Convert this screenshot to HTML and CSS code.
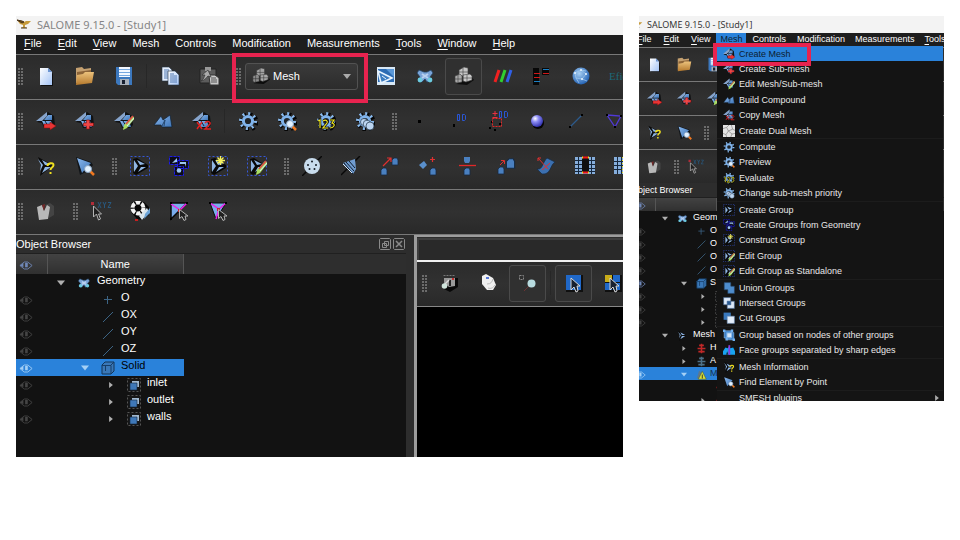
FILE: index.html
```html
<!DOCTYPE html>
<html lang="en">
<head>
<meta charset="utf-8">
<title>SALOME 9.15.0 - [Study1]</title>
<link rel="stylesheet" href="styles.css">
</head>
<body>
<svg class="sprite" aria-hidden="true">
<defs>
<linearGradient id="blue" x1="0" y1="0" x2="1" y2="1"><stop offset="0" stop-color="#8ab8ee"/><stop offset="1" stop-color="#3f76b8"/></linearGradient>
<linearGradient id="paper" x1="0" y1="0" x2="1" y2="1"><stop offset="0" stop-color="#fff"/><stop offset="1" stop-color="#a4c4f6"/></linearGradient>
<linearGradient id="tan" x1="0" y1="0" x2="0" y2="1"><stop offset="0" stop-color="#ecc27c"/><stop offset="1" stop-color="#b4782c"/></linearGradient>
<radialGradient id="ball" cx=".35" cy=".3" r=".7"><stop offset="0" stop-color="#fff"/><stop offset=".4" stop-color="#8c8cf4"/><stop offset="1" stop-color="#3434b0"/></radialGradient>
<radialGradient id="earth" cx=".4" cy=".35" r=".7"><stop offset="0" stop-color="#a8d0f4"/><stop offset="1" stop-color="#1c5cb0"/></radialGradient>

<symbol id="logo" viewBox="0 0 16 12"><path d="M1 2l5 1 2 1 2-1h5l-3 3-3 1v2l2 1H5l2-1V7L4 6z" fill="#c69a3a"/><path d="M1 2l5 1 2 1-2 1zM5 10h6" stroke="#4a3418" fill="#7a5a24"/></symbol>
<symbol id="new" viewBox="0 0 20 20"><path d="M4 3h9l4 5v12H5z" fill="#111"/><path d="M4 2h8l4 4v13H4z" fill="url(#paper)"/><path d="M12 2l4 4h-4z" fill="#6c94d0"/></symbol>
<symbol id="open" viewBox="0 0 20 20"><path d="M1 2l6-1 2 2 7-1v15H1z" fill="#c4a070"/><path d="M2 6l14-2v13H2z" fill="#8c6438"/><path d="M2 9l6-1 2-2h9l-2 11-16 2z" fill="url(#tan)"/></symbol>
<symbol id="save" viewBox="0 0 20 20"><path d="M2 1h16v18H4l-2-2z" fill="#3c78be"/><path d="M5 1h11v10H5z" fill="#f4f8ff"/><path d="M5 3.500h11M5 6.500h11M5 9.500h11" stroke="#76a8e0"/><path d="M6 13h9v6H6z" fill="#a8b0ba"/><path d="M8 14h3v4H8z" fill="#182030"/></symbol>
<symbol id="copy" viewBox="0 0 20 20"><path d="M2 1h7l3 3v11H2z" fill="#e4eefc" stroke="#234" stroke-width=".6"/><path d="M4 4h5M4 6h5M4 8h5M4 10h5M4 12h5" stroke="#5078b0"/><path d="M8 5h7l4 4v10H8z" fill="url(#paper)" stroke="#234" stroke-width=".6"/><path d="M10 8h4M10 10h7M10 12h7M10 14h7M10 16h7" stroke="#5078b0"/></symbol>
<symbol id="paste" viewBox="0 0 20 20"><path d="M1 3h16v14H1z" fill="#5c5c5c" stroke="#222"/><path d="M6 1h6v4H6z" fill="#999"/><path d="M10 9h6l4 3v7h-9z" fill="#c8c8c8" stroke="#333"/><path d="M12 12h5M12 14h6M12 16h6" stroke="#555"/><path d="M3 9l6-5 3 7-3-1c-2 2-3 4-7 5 3-2 3-4 4-6z" fill="#aaa" stroke="#333" stroke-width=".7"/></symbol>
<symbol id="cubes" viewBox="0 0 20 20"><path d="M2 18l11 1 7-5-3-4z" fill="#0c0c0c"/><g stroke="#333" stroke-width=".6"><path d="M5 4l5-3 4 1v8H5z" fill="#a4a4a4"/><path d="M1 10l5-2 2 2v6l-5 1-2-1z" fill="#8c8c8c"/><path d="M9 9l7-1 2 2v4l-6 2-3-1z" fill="#a8a8a8"/><path d="M9 2v13M5 6h9M4 9v8M1 13h7M13 9v7M9 12h9" fill="none"/></g></symbol>
<symbol id="pen" viewBox="0 0 20 20"><path d="M1 1h18v18H1z" fill="#d8e8f6"/><path d="M2 3h16v13H2z" fill="#2c6cb4"/><path d="M10 3h8v8z" fill="#5a98d8"/><path d="M2 5l14 7-11 5z" fill="#3c7cc0" stroke="#e8f4ff" stroke-width="1.600"/><path d="M6 10l4 3" stroke="#e8f4ff"/></symbol>
<symbol id="geom" viewBox="0 0 20 20"><path d="M4 4l5 2h3l4-2 2 3-3 4 1 4-4 1-2-3-3 3-4-1 2-4-3-4z" fill="#7aa4d8" stroke="#24415e" stroke-width=".8"/><path d="M7 8l6 4M13 8l-6 4" stroke="#b8d0f0" stroke-width="2"/><circle cx="5" cy="14" r="2.400" fill="#6ccce0"/><circle cx="15" cy="14" r="2.400" fill="#6ccce0"/></symbol>
<symbol id="rgb" viewBox="0 0 20 20"><g stroke-width="3"><path d="M2 16L6 4" stroke="#f02020"/><path d="M8 16l4-12" stroke="#30d030"/><path d="M14 16l4-12" stroke="#3060e8"/></g></symbol>
<symbol id="tree" viewBox="0 0 20 20"><path d="M1 2h6v17H1zM10 2h7v7h-7z" fill="#080808"/><path d="M11 3.500h6M2 15.500h6" stroke="#1c80c4" stroke-width="1.200"/><path d="M2 7.500h6M11 7.500h6M2 11.500h6" stroke="#d01818" stroke-width="1.200"/></symbol>
<symbol id="globe" viewBox="0 0 20 20"><circle cx="10" cy="10" r="8.500" fill="url(#earth)"/><path d="M4 7l6-3 5 4-4 5-6-1zM10 4l5 1M5 12l3 5M11 13l5 2" fill="none" stroke="#a4ccf0" stroke-width=".7"/><g fill="#e8f4ff"><circle cx="4" cy="7" r="1"/><circle cx="10" cy="4" r="1"/><circle cx="15" cy="8" r="1"/><circle cx="11" cy="13" r="1"/></g></symbol>

<symbol id="mesh" viewBox="0 0 20 20"><path d="M1 11L12 1l6 4 1 9-3 3H8l-2-5z" fill="#101214"/><path d="M0 10L11 1v4l-5 5z" fill="#86a4cc"/><path d="M8 9l4-5h4v5z" fill="url(#blue)"/><path d="M6 10h9l2 6H9z" fill="url(#blue)"/><path d="M9 10l3 5" stroke="#14243a"/></symbol>
<symbol id="create" viewBox="0 0 20 20"><use href="#mesh"/><path d="M8 13h6v-2l6 4-6 4v-2H8z" fill="#e83434" stroke="#8c0c0c" stroke-width=".5"/></symbol>
<symbol id="sub" viewBox="0 0 20 20"><use href="#mesh"/><path d="M11.500 9h3v3h4v3h-4v3h-3v-3h-3v-3h3z" fill="#f04848" stroke="#8c0c0c" stroke-width=".6"/></symbol>
<symbol id="pencil" viewBox="0 0 20 20"><path d="M9 19l1-5 8-9 3 2-8 10z" fill="#a8dc60"/><path d="M12 13l7-8" stroke="#e04848" stroke-width="1.500"/><path d="M13 15l7-8" stroke="#d8e8f4"/></symbol>
<symbol id="edit" viewBox="0 0 20 20"><use href="#mesh"/><use href="#pencil"/></symbol>
<symbol id="compound" viewBox="0 0 20 20"><path d="M1 14l7-9 2 4 7-5 2 12H9l-1-2z" fill="url(#blue)" stroke="#102030" stroke-width=".7"/><path d="M9 15l3-6-1 6" fill="none" stroke="#25476e"/></symbol>
<symbol id="copymesh" viewBox="0 0 20 20"><use href="#mesh"/><path d="M5 11l5 7M10 11l-5 7M13 12c2-3 6-1 5 1l-5 5h6" fill="none" stroke="#e02020" stroke-width="1.500"/></symbol>
<symbol id="gear" viewBox="0 0 20 20"><circle cx="11" cy="11" r="7.500" fill="none" stroke="#060606" stroke-width="4" stroke-dasharray="3 2.890"/><circle cx="10" cy="10" r="7.500" fill="none" stroke="#8abcf0" stroke-width="3" stroke-dasharray="2 3.890"/><circle cx="10" cy="10" r="4.600" fill="#202428" stroke="#80b4ec" stroke-width="3"/></symbol>
<symbol id="lens" viewBox="0 0 20 20"><path d="M15 15l4 4" stroke="#f07820" stroke-width="2.500"/><circle cx="13" cy="13" r="3.500" fill="#e4f2ff" stroke="#88a4c4"/></symbol>
<symbol id="preview" viewBox="0 0 20 20"><use href="#gear"/><use href="#lens"/></symbol>
<symbol id="evaluate" viewBox="0 0 20 20"><use href="#gear"/><path id="n123" d="M2 10l2-1v8M7 10c3-2 5 0 4 2l-4 5h5M14 9h4l-2 3c4 1 2 5-2 5" fill="none" stroke="#111" stroke-width="2.500"/><path d="M2 10l2-1v8M7 10c3-2 5 0 4 2l-4 5h5M14 9h4l-2 3c4 1 2 5-2 5" fill="none" stroke="#f0e820" stroke-width="1.200"/></symbol>
<symbol id="priority" viewBox="0 0 20 20"><use href="#gear"/><g fill="#bcd6f2" stroke="#233649" stroke-width=".7"><circle cx="9" cy="11" r="3.500"/><circle cx="12" cy="13" r="3.800"/><circle cx="15" cy="15" r="4"/></g></symbol>
<symbol id="node" viewBox="0 0 20 20"><path d="M8 9h3v3H8z" fill="#000"/></symbol>
<symbol id="zero" viewBox="0 0 20 20"><path d="M4 13h2v3H4z" fill="#000"/><path d="M8.500 3.500h2v6h-2zM13.500 3.500h2l1 1v4l-1 1h-2z" fill="none" stroke="#2a56d4"/></symbol>
<symbol id="zerogroup" viewBox="0 0 20 20"><path d="M1 16h2v2H1zM3 10h2v2H3zM11 12h2v2h-2zM6 18h2v2H6z" fill="#000"/><path d="M7 0v5M4.500 2.500h5M4.500 6.500h5" stroke="#e83040"/><path d="M11.500.5h2v6h-2zM16.500.5h2l1 1v4l-1 1h-2z" fill="none" stroke="#2a56d4"/><path d="M4.500 7.500h9v8h-9z" fill="none" stroke="#e02828" stroke-dasharray="2 1"/></symbol>
<symbol id="ball0" viewBox="0 0 20 20"><circle cx="11" cy="12" r="6" fill="#050505"/><circle cx="10" cy="10" r="6" fill="url(#ball)"/></symbol>
<symbol id="edge" viewBox="0 0 20 20"><path d="M4 16L16 4" stroke="#2c5a8c" stroke-width="1.300"/><path d="M3 15h2v2H3zM15 3h2v2h-2z" fill="#000"/></symbol>
<symbol id="face" viewBox="0 0 20 20"><path d="M2 4l14 1-6 11z" fill="none" stroke="#5038d8" stroke-width="1.300"/><path d="M1 3h2v2H1zM15 4h2v2h-2zM9 15h2v2H9z" fill="#000"/></symbol>

<symbol id="arrowmesh" viewBox="0 0 20 20"><path d="M2 1l14 8-1 2L4 20l2-9z" fill="#0a0a0a"/><path d="M2 3l5 6-3 6 1-6zM6 4l9 5H9zM15 11l-9 6 3-6z" fill="#8fb6e4"/></symbol>
<symbol id="info" viewBox="0 0 20 20"><use href="#arrowmesh"/><path d="M11.500 10c0-3 6-4 6-1 0 3-3 2-3 5M14.500 16v2" fill="none" stroke="#f0e020" stroke-width="2"/></symbol>
<symbol id="find" viewBox="0 0 20 20"><path d="M1 1l15 5 2 3-5 6-8 4z" fill="#101418"/><path d="M2 2l14 5-3 3-6 7z" fill="url(#blue)"/><use href="#lens"/></symbol>
<symbol id="dash" viewBox="0 0 20 20"><path d="M.5.5h19v19H.5z" fill="none" stroke="#3658d8" stroke-dasharray="2 2"/></symbol>
<symbol id="group" viewBox="0 0 20 20"><use href="#dash"/><path d="M3 3l4-1 11 7v3L6 19l-3-2 2-7z" fill="#080808"/><path d="M4 4l4 6-4 6V9zM7 4l8 4-5 1zM16 11l-8 5 3-5z" fill="#8fb6e4"/></symbol>
<symbol id="geogroup" viewBox="0 0 20 20"><path d="M.5.5h10v8H.5zM8.500 4.500h11v8h-11zM5.500 10.500h9v9h-9z" fill="#0c0c18" stroke="#1c1ce8" stroke-dasharray="3 1"/><path d="M3 7l5-5v4zM11 6h6v5l-1-3h-5z" fill="#9cc4f0"/><circle cx="10" cy="14.500" r="2.300" fill="#9cc4f0"/></symbol>
<symbol id="stargroup" viewBox="0 0 20 20"><use href="#group"/><path d="M12.500 0v9M8 4.500h9M9.500 1.500l6 6M15.500 1.500l-6 6" stroke="#f4f060" stroke-width="1.300"/></symbol>
<symbol id="editgroup" viewBox="0 0 20 20"><use href="#group"/><use href="#pencil"/></symbol>
<symbol id="button4" viewBox="0 0 20 20"><path d="M0 20L20 0" stroke="#080808" stroke-width="1.500"/><circle cx="10" cy="10" r="8" fill="#c8dced"/><g fill="#141c24"><circle cx="10" cy="5.500" r="1"/><circle cx="6" cy="9" r="1"/><circle cx="14" cy="9" r="1"/><circle cx="7.500" cy="13" r="1"/><circle cx="12.500" cy="13" r="1"/></g></symbol>
<symbol id="cone" viewBox="0 0 20 20"><path d="M0 19L19 0" stroke="#080808" stroke-width="1.500"/><path d="M2 7l12-4 1 10-3 5z" fill="#709cd0"/><path d="M3 7l9 11M5 6l8 9M8 5l6 7" stroke="#101c2c"/><path d="M2 8l9 9" stroke="#d4e8fc"/></symbol>
<symbol id="bell" viewBox="0 0 8 9"><path d="M1 8V3l2-2h3l1 2v5z" fill="#4a80c0" stroke="#162a42" stroke-width=".8"/></symbol>
<symbol id="translate" viewBox="0 0 20 20"><use href="#bell" x="0" y="11" width="8" height="9"/><use href="#bell" x="11" y="1" width="8" height="9"/><path d="M3 10l8-8M7 2h4v4" fill="none" stroke="#e03030" stroke-width="1.200"/></symbol>
<symbol id="rotate" viewBox="0 0 20 20"><path d="M0 9l5-4 3 4-4 4z" fill="#5a90cc"/><use href="#bell" x="10" y="11" width="8" height="9"/><path d="M13.500 1v5M11 3.500h5" stroke="#e03030" stroke-width="1.200"/></symbol>
<symbol id="symmetry" viewBox="0 0 20 20"><use href="#bell" x="5" y="11" width="8" height="9"/><path d="M6 1h6v4l-1 2H7L6 5z" fill="#4a80c0"/><path d="M1 9.500h17" stroke="#e02828" stroke-width="1.300"/></symbol>
<symbol id="scale" viewBox="0 0 20 20"><use href="#bell" x="0" y="10" width="8" height="9"/><use href="#bell" x="8" y="1" width="11" height="13"/><path d="M3 9l4-4M4 4.500h3.500V8" fill="none" stroke="#e03030"/></symbol>
<symbol id="offset" viewBox="0 0 20 20"><path d="M1 13c6 1 5-6 10-11l8 4c-5 3-4 13-13 12z" fill="#3c70b0" stroke="#162a42" stroke-width=".7"/><path d="M2 2l10 11M6 14l8-7M2 2h3M2 2v3" fill="none" stroke="#e03030"/></symbol>
<symbol id="sew" viewBox="0 0 20 20"><path d="M0 1h20v17H0z" fill="#86aedc"/><path d="M3.500 1v17M16.500 1v17M0 4.500h20M0 8.500h20M0 12.500h20M0 15.500h20" stroke="#16283e"/><path d="M7 2h7v15H7z" fill="#101010"/><path d="M8 1.500h5M8 16.500h5" stroke="#f01818" stroke-width="2"/><path d="M7 1.500h1M13 1.500h1M7 16.500h1M13 16.500h1" stroke="#f0e020" stroke-width="2"/></symbol>
<symbol id="sew2" viewBox="0 0 20 20"><path d="M0 1h16v17H0z" fill="#86aedc"/><path d="M3.500 1v17M7.500 1v17M11.500 1v17M0 5.500h16M0 9.500h16M0 13.500h16" stroke="#16283e"/><path d="M8.500 1v17" stroke="#f0e020" stroke-dasharray="1 2"/></symbol>
<symbol id="shirt" viewBox="0 0 20 20"><path d="M9 4l5-2 4 3v9l-5 3z" fill="#444"/><path d="M1 6l5-2 2 6 3-6 3 2-2 12-9 1z" fill="#b8b8b8"/><path d="M6 4l2 6 1-7" fill="#782828"/></symbol>
<symbol id="cursor" viewBox="0 0 20 20"><path d="M10.500 8.500v9l2.500-2 2 4 2-1-1-3.500h3z" fill="#202020" stroke="#b4b4b4"/></symbol>
<symbol id="xyz" viewBox="0 0 24 20"><path d="M2 1h3v3H2z" fill="#b02c38"/><path d="M9 1l3 6M12 1L9 7M14 1l1.500 3L17 1M15.500 4v3M19 1.500h3l-3 5h3" fill="none" stroke="#28587e"/><path d="M4.500 5v11l3-3 2 6 2-1-2-5h3z" fill="#202020" stroke="#b4b4b4"/></symbol>
<symbol id="clip" viewBox="0 0 20 20"><path d="M2 1h12l5 5v8l-7 5-5-1-6-7z" fill="#080808"/><circle cx="8" cy="7" r="5.500" fill="none" stroke="#f4f4f4" stroke-width="4" stroke-dasharray="4.500 1.260"/><path d="M9 15l8-8 2 4-7 8z" fill="#d8e4ec"/><path d="M15 13l5-6v5l-6 6z" fill="#6ca4d8"/><path d="M5 18h3v2H5z" fill="#c82020"/></symbol>
<symbol id="cut1" viewBox="0 0 20 20"><path d="M2 2h16L2 18z" fill="#7aacec"/><path d="M17 2h-15v16L18 2" fill="none" stroke="#080808" stroke-width="1.500"/><path d="M2 3l9 6M11 9l7-7" stroke="#f020e8" stroke-width="1.500"/><path d="M1 1h2v2H1zM17 1h2v2h-2zM1 17h2v2H1z"/><path d="M9 8h3v3H9z" fill="#d02030"/><use href="#cursor"/></symbol>
<symbol id="cut2" viewBox="0 0 20 20"><path d="M2 2h16L8 18z" fill="#7aacec" stroke="#080808"/><path d="M2 2l9 6 7-6M11 8L8 18" fill="none" stroke="#f020e8" stroke-width="1.500"/><path d="M1 1h2v2H1zM17 1h2v2h-2z"/><path d="M9 7h3v3H9z" fill="#d02030"/><use href="#cursor"/></symbol>

<symbol id="eye" viewBox="0 0 16 10"><path d="M1 5l5-4h4l5 4-5 4H6z" fill="none" stroke="currentColor"/><path d="M7 2h3v5H7z" fill="currentColor"/><path d="M1 5l4-3v5z" fill="currentColor"/></symbol>
<symbol id="plus" viewBox="0 0 14 14"><path d="M6.500 3v8M3 6.500h8" stroke="#3c6484"/></symbol>
<symbol id="line" viewBox="0 0 14 14"><path d="M2 12L12 2" stroke="#3c6484"/></symbol>
<symbol id="solid" viewBox="0 0 14 14"><path d="M1 4l3-3h9v9l-3 3H1z" fill="#3a78b8" stroke="#123456"/><path d="M1 4.500h9V13M10 4l3-3M4.500 4v6" fill="none" stroke="#173e68"/></symbol>
<symbol id="shape" viewBox="0 0 14 14"><path d="M0 0h14v14H0z" fill="#161616"/><path d="M.5.5h13v13H.5z" fill="none" stroke="#555" stroke-dasharray="2 2"/><path d="M5 3h7v6H5z" fill="#a0b8d0"/><path d="M3 5h7v7H3z" fill="#3f78b8" stroke="#11263c" stroke-width=".6"/></symbol>
<symbol id="hyp" viewBox="0 0 14 14"><path d="M4 3h6M2 7h10M3 11h8M7 1v12" stroke="currentColor" stroke-width="2"/></symbol>
<symbol id="warn" viewBox="0 0 14 14"><path d="M1 12L4 2l9 10z" fill="#5c7890"/><path d="M3 13L8 3l5 10z" fill="#d8e040" stroke="#485010" stroke-width=".6"/><path d="M8 7v5" stroke="#181818"/></symbol>
<symbol id="down" viewBox="0 0 8 5"><path d="M0 0h8L4 5z" fill="currentColor"/></symbol>
<symbol id="right" viewBox="0 0 5 8"><path d="M0 0v8l5-4z" fill="currentColor"/></symbol>

<symbol id="float" viewBox="0 0 12 12"><path d="M1.500.5h9l1 1v9l-1 1h-9l-1-1v-9zM5.500 3.500h4v4h-4zM3.500 5.500h4v4h-4z" fill="none" stroke="#8a8a8a"/></symbol>
<symbol id="close" viewBox="0 0 12 12"><path d="M1.500.5h9l1 1v9l-1 1h-9l-1-1v-9z" fill="none" stroke="#8a8a8a"/><path d="M3 3l6 6M9 3l-6 6" stroke="#8a8a8a" stroke-width="1.500"/></symbol>
<symbol id="camera" viewBox="0 0 20 20"><path d="M6 5h12v9l-8 5-6-3z" fill="#080808"/><path d="M3.500 2.500h11" stroke="#777" stroke-dasharray="2 1"/><path d="M4 5h11v8l-6 1-5-4z" fill="#999"/><path d="M9 7h2v6H9z" fill="#222"/><path d="M12 5h2v2h-2z" fill="#c03030"/><path d="M4 12l5-5" stroke="#ddd" stroke-width="1.500"/><circle cx="4.500" cy="13" r="2.800" fill="#d0e4dc"/></symbol>
<symbol id="mouse" viewBox="0 0 20 20"><path d="M3 3l4-2 7 4 3 7-3 5-6 0-5-6z" fill="#f0f0f0"/><path d="M8 11c4 0 5-2 6-5M9 15c3 1 5 0 7-3" fill="none" stroke="#bbb"/><path d="M7 4h3v2H7z" fill="#5878d8"/></symbol>
<symbol id="zoompt" viewBox="0 0 20 20"><path d="M1.500 2.500h4v4h-4z" fill="none" stroke="#888" stroke-dasharray="2 1"/><path d="M6 18l5-5" stroke="#6c3434"/><circle cx="13.500" cy="10.500" r="4" fill="#b8dce0"/></symbol>
<symbol id="select" viewBox="0 0 20 20"><path d="M2 2h17v17H2z" fill="#101010"/><path d="M2 2h15v15H2z" fill="#2068c8"/><path d="M7 5v12l3-3 2 5 2-1-1-5h3z" fill="#182030" stroke="#d8d8d8"/></symbol>
<symbol id="select4" viewBox="0 0 20 20"><path d="M2 2h17v17H2z" fill="#101010"/><path d="M2 2h7v7H2z" fill="#c8ac18"/><path d="M10 2h7v7h-7zM2 10h7v7H2zM10 10h7v7h-7z" fill="#2068c8"/><path d="M7 5v12l3-3 2 5 2-1-1-5h3z" fill="#182030" stroke="#d8d8d8"/></symbol>

<symbol id="dual" viewBox="0 0 20 20"><path d="M0 0h20v20H0z" fill="#e4e4e4"/><path d="M0 6l6-2 4-4M6 4l3 6 7-3 4 2M9 10l-4 6-5-2M9 10l6 5 5-1M15 15l-2 5M5 16l1 4M16 7l-2-7" fill="none" stroke="#777"/></symbol>
<symbol id="union" viewBox="0 0 20 20"><path d="M2 1h11v6h6v12H8v-6H2z" fill="#4e8ccc" stroke="#243f60"/></symbol>
<symbol id="intersect" viewBox="0 0 20 20"><path d="M1 1h12v12H1zM7 7h12v12H7z" fill="#dce8f8" stroke="#3a5c88"/><path d="M7 7h6v6H7z" fill="#285890"/></symbol>
<symbol id="cut" viewBox="0 0 20 20"><path d="M1 1h12v12H1z" fill="#3a78bc"/><path d="M7 7h12v12H7z" fill="#e4eefa" stroke="#6888b0"/></symbol>
<symbol id="nodes" viewBox="0 0 20 20"><path d="M2 3h12v12H2zM6 6h12v12H6z" fill="#3c80c8" stroke="#90c0f0"/><path d="M7 7h7v7H7z" fill="#d4e6fa"/><path d="M0 1h4v4H0zM13 1h4v4h-4zM4 15h4v4H4zM16 16h4v4h-4z" fill="#70b0f0"/></symbol>
<symbol id="sharp" viewBox="0 0 20 20"><path d="M0 12l4-6 4 1 2-3 2 3 5-1 3 6v6H0z" fill="#18a4f0"/><path d="M9 2h3v16H9z" fill="#9038e0"/><path d="M5 18l2-6 2 6z" fill="#142c40"/></symbol>
</defs>
</svg>

<main class="page">
<section class="window" aria-label="Main window">
  <header class="titlebar"><svg class="logo"><use href="#logo"/></svg><span>SALOME 9.15.0 - [Study1]</span></header>
  <nav class="menubar">
    <a href="#"><u>F</u>ile</a><a href="#"><u>E</u>dit</a><a href="#"><u>V</u>iew</a><a href="#">Mesh</a><a href="#">Controls</a><a href="#">Modification</a><a href="#">Measurements</a><a href="#"><u>T</u>ools</a><a href="#"><u>W</u>indow</a><a href="#"><u>H</u>elp</a>
  </nav>
  <div class="toolbar">
    <i class="handle"></i>
    <button aria-label="New"><svg><use href="#new"/></svg></button>
    <button aria-label="Open"><svg><use href="#open"/></svg></button>
    <button aria-label="Save"><svg><use href="#save"/></svg></button>
    <i class="sep"></i>
    <button aria-label="Copy"><svg><use href="#copy"/></svg></button>
    <button aria-label="Paste"><svg><use href="#paste"/></svg></button>
    <div class="module marked">
      <i class="handle"></i>
      <label class="combo"><svg class="combo-icon"><use href="#cubes"/></svg><select aria-label="Module"><option>Mesh</option></select><svg class="chevron"><use href="#down"/></svg></label>
    </div>
    <button aria-label="Shaper"><svg><use href="#pen"/></svg></button>
    <button aria-label="Geometry"><svg><use href="#geom"/></svg></button>
    <button class="pressed" aria-label="Mesh"><svg class="bright"><use href="#cubes"/></svg></button>
    <button aria-label="Fields"><svg><use href="#rgb"/></svg></button>
    <button aria-label="YACS"><svg><use href="#tree"/></svg></button>
    <button aria-label="ParaViS"><svg><use href="#globe"/></svg></button>
    <button class="eficas">Efica</button>
  </div>
  <div class="toolbar">
    <i class="handle"></i>
    <button aria-label="Create Mesh"><svg><use href="#create"/></svg></button>
    <button aria-label="Create Sub-mesh"><svg><use href="#sub"/></svg></button>
    <button aria-label="Edit Mesh"><svg><use href="#edit"/></svg></button>
    <button aria-label="Build Compound"><svg><use href="#compound"/></svg></button>
    <button aria-label="Copy Mesh"><svg><use href="#copymesh"/></svg></button>
    <i class="sep"></i>
    <button aria-label="Compute"><svg><use href="#gear"/></svg></button>
    <button aria-label="Preview"><svg><use href="#preview"/></svg></button>
    <button aria-label="Evaluate"><svg><use href="#evaluate"/></svg></button>
    <button aria-label="Priority"><svg><use href="#priority"/></svg></button>
    <i class="handle"></i>
    <button aria-label="Node"><svg><use href="#node"/></svg></button>
    <button aria-label="0D Element"><svg><use href="#zero"/></svg></button>
    <button aria-label="0D on Group"><svg><use href="#zerogroup"/></svg></button>
    <button aria-label="Ball"><svg><use href="#ball0"/></svg></button>
    <button aria-label="Edge"><svg><use href="#edge"/></svg></button>
    <button aria-label="Triangle"><svg><use href="#face"/></svg></button>
  </div>
  <div class="toolbar">
    <i class="handle"></i>
    <button aria-label="Mesh Information"><svg><use href="#info"/></svg></button>
    <button aria-label="Find Element"><svg><use href="#find"/></svg></button>
    <i class="handle"></i>
    <button aria-label="Create Group"><svg><use href="#group"/></svg></button>
    <button aria-label="Groups from Geometry"><svg><use href="#geogroup"/></svg></button>
    <button aria-label="Construct Group"><svg><use href="#stargroup"/></svg></button>
    <button aria-label="Edit Group"><svg><use href="#editgroup"/></svg></button>
    <i class="handle"></i>
    <button aria-label="Merge Nodes"><svg><use href="#button4"/></svg></button>
    <button aria-label="Merge Elements"><svg><use href="#cone"/></svg></button>
    <button aria-label="Translation"><svg><use href="#translate"/></svg></button>
    <button aria-label="Rotation"><svg><use href="#rotate"/></svg></button>
    <button aria-label="Symmetry"><svg><use href="#symmetry"/></svg></button>
    <button aria-label="Scale"><svg><use href="#scale"/></svg></button>
    <button aria-label="Offset"><svg><use href="#offset"/></svg></button>
    <button aria-label="Sewing"><svg><use href="#sew"/></svg></button>
    <button aria-label="Duplicate"><svg><use href="#sew2"/></svg></button>
  </div>
  <div class="toolbar">
    <i class="handle"></i>
    <button aria-label="Adaptation"><svg><use href="#shirt"/></svg></button>
    <i class="handle"></i>
    <button aria-label="Move Node"><svg class="wide"><use href="#xyz"/></svg></button>
    <button aria-label="Clipping"><svg><use href="#clip"/></svg></button>
    <button aria-label="Diagonal Inversion"><svg><use href="#cut1"/></svg></button>
    <button aria-label="Union of Triangles"><svg><use href="#cut2"/></svg></button>
  </div>
  <div class="workspace">
    <section class="dock">
      <header class="dock-title"><h2>Object Browser</h2><button aria-label="Float"><svg><use href="#float"/></svg></button><button aria-label="Close"><svg><use href="#close"/></svg></button></header>
      <div class="tree-area">
        <table class="tree">
          <thead><tr><th class="vis"><svg class="eye lit"><use href="#eye"/></svg></th><th>Name</th></tr></thead>
          <tbody>
            <tr><td></td><td><div class="cell l0"><svg class="tw"><use href="#down"/></svg><svg class="ic"><use href="#geom"/></svg>Geometry</div></td></tr>
            <tr><td><svg class="eye"><use href="#eye"/></svg></td><td><div class="cell l1"><i class="tw"></i><svg class="ic"><use href="#plus"/></svg>O</div></td></tr>
            <tr><td><svg class="eye"><use href="#eye"/></svg></td><td><div class="cell l1"><i class="tw"></i><svg class="ic"><use href="#line"/></svg>OX</div></td></tr>
            <tr><td><svg class="eye"><use href="#eye"/></svg></td><td><div class="cell l1"><i class="tw"></i><svg class="ic"><use href="#line"/></svg>OY</div></td></tr>
            <tr><td><svg class="eye"><use href="#eye"/></svg></td><td><div class="cell l1"><i class="tw"></i><svg class="ic"><use href="#line"/></svg>OZ</div></td></tr>
            <tr class="selected"><td><svg class="eye"><use href="#eye"/></svg></td><td><div class="cell l1"><svg class="tw"><use href="#down"/></svg><svg class="ic"><use href="#solid"/></svg>Solid</div></td></tr>
            <tr><td><svg class="eye"><use href="#eye"/></svg></td><td><div class="cell l2"><svg class="tw"><use href="#right"/></svg><svg class="ic"><use href="#shape"/></svg>inlet</div></td></tr>
            <tr><td><svg class="eye"><use href="#eye"/></svg></td><td><div class="cell l2"><svg class="tw"><use href="#right"/></svg><svg class="ic"><use href="#shape"/></svg>outlet</div></td></tr>
            <tr><td><svg class="eye"><use href="#eye"/></svg></td><td><div class="cell l2"><svg class="tw"><use href="#right"/></svg><svg class="ic"><use href="#shape"/></svg>walls</div></td></tr>
          </tbody>
        </table>
      </div>
    </section>
    <section class="viewer" aria-label="Viewer">
      <div class="tabs"></div>
      <div class="toolbar">
        <i class="handle"></i>
        <button aria-label="Dump View"><svg><use href="#camera"/></svg></button>
        <button aria-label="Interaction Style"><svg><use href="#mouse"/></svg></button>
        <button class="pressed" aria-label="Zooming Style"><svg><use href="#zoompt"/></svg></button>
        <i class="sep"></i>
        <button class="pressed" aria-label="Preselection"><svg><use href="#select"/></svg></button>
        <button aria-label="Selection"><svg><use href="#select4"/></svg></button>
      </div>
      <div class="scene"></div>
    </section>
  </div>
</section>

<section class="window compact" aria-label="Mesh menu">
  <div class="frame">
  <header class="titlebar"><svg class="logo"><use href="#logo"/></svg><span>SALOME 9.15.0 - [Study1]</span></header>
  <nav class="menubar">
    <a href="#"><u>F</u>ile</a><a href="#"><u>E</u>dit</a><a href="#"><u>V</u>iew</a><a class="active" href="#">Mesh</a><a href="#">Controls</a><a href="#">Modification</a><a href="#">Measurements</a><a href="#"><u>T</u>ools</a>
  </nav>
  <div class="toolbar">
    <i class="handle"></i>
    <button aria-label="New"><svg><use href="#new"/></svg></button>
    <button aria-label="Open"><svg><use href="#open"/></svg></button>
    <button aria-label="Save"><svg><use href="#save"/></svg></button>
  </div>
  <div class="toolbar">
    <i class="handle"></i>
    <button aria-label="Create Mesh"><svg><use href="#create"/></svg></button>
    <button aria-label="Create Sub-mesh"><svg><use href="#sub"/></svg></button>
    <button aria-label="Edit Mesh"><svg><use href="#edit"/></svg></button>
  </div>
  <div class="toolbar">
    <i class="handle"></i>
    <button aria-label="Mesh Information"><svg><use href="#info"/></svg></button>
    <button aria-label="Find Element"><svg><use href="#find"/></svg></button>
    <i class="handle"></i>
  </div>
  <div class="toolbar">
    <i class="handle"></i>
    <button aria-label="Adaptation"><svg><use href="#shirt"/></svg></button>
    <i class="handle"></i>
    <button aria-label="Move Node"><svg class="wide"><use href="#xyz"/></svg></button>
  </div>
  <section class="dock">
    <header class="dock-title"><h2>Object Browser</h2></header>
    <div class="tree-area">
      <table class="tree">
        <thead><tr><th class="vis"><svg class="eye lit"><use href="#eye"/></svg></th><th></th></tr></thead>
        <tbody>
          <tr><td></td><td><div class="cell l0"><svg class="tw"><use href="#down"/></svg><svg class="ic"><use href="#geom"/></svg>Geome</div></td></tr>
          <tr><td><svg class="eye"><use href="#eye"/></svg></td><td><div class="cell l1"><i class="tw"></i><svg class="ic"><use href="#plus"/></svg>O</div></td></tr>
          <tr><td><svg class="eye"><use href="#eye"/></svg></td><td><div class="cell l1"><i class="tw"></i><svg class="ic"><use href="#line"/></svg>O</div></td></tr>
          <tr><td><svg class="eye"><use href="#eye"/></svg></td><td><div class="cell l1"><i class="tw"></i><svg class="ic"><use href="#line"/></svg>O</div></td></tr>
          <tr><td><svg class="eye"><use href="#eye"/></svg></td><td><div class="cell l1"><i class="tw"></i><svg class="ic"><use href="#line"/></svg>O</div></td></tr>
          <tr><td><svg class="eye lit"><use href="#eye"/></svg></td><td><div class="cell l1"><svg class="tw"><use href="#down"/></svg><svg class="ic"><use href="#solid"/></svg>S</div></td></tr>
          <tr><td><svg class="eye"><use href="#eye"/></svg></td><td><div class="cell l2"><svg class="tw"><use href="#right"/></svg><svg class="ic"><use href="#shape"/></svg></div></td></tr>
          <tr><td><svg class="eye"><use href="#eye"/></svg></td><td><div class="cell l2"><svg class="tw"><use href="#right"/></svg><svg class="ic"><use href="#shape"/></svg></div></td></tr>
          <tr><td><svg class="eye"><use href="#eye"/></svg></td><td><div class="cell l2"><svg class="tw"><use href="#right"/></svg><svg class="ic"><use href="#shape"/></svg></div></td></tr>
          <tr><td></td><td><div class="cell l0"><svg class="tw"><use href="#down"/></svg><svg class="ic"><use href="#arrowmesh"/></svg>Mesh</div></td></tr>
          <tr><td></td><td><div class="cell l1"><svg class="tw"><use href="#right"/></svg><svg class="ic red"><use href="#hyp"/></svg>H</div></td></tr>
          <tr><td></td><td><div class="cell l1"><svg class="tw"><use href="#right"/></svg><svg class="ic teal"><use href="#hyp"/></svg>A</div></td></tr>
          <tr class="selected"><td><svg class="eye"><use href="#eye"/></svg></td><td><div class="cell l1"><svg class="tw"><use href="#down"/></svg><svg class="ic"><use href="#warn"/></svg>M</div></td></tr>
          <tr><td></td><td><div class="cell l2"><i class="tw"></i><svg class="ic red"><use href="#hyp"/></svg></div></td></tr>
          <tr><td></td><td><div class="cell l2"><svg class="tw"><use href="#right"/></svg><svg class="ic red"><use href="#hyp"/></svg></div></td></tr>
        </tbody>
      </table>
    </div>
  </section>
  </div>
  <div class="menu" role="menu">
    <button class="current marked"><svg><use href="#create"/></svg>Create Mesh</button>
    <button><svg><use href="#sub"/></svg>Create Sub-mesh</button>
    <button><svg><use href="#edit"/></svg>Edit Mesh/Sub-mesh</button>
    <button><svg><use href="#compound"/></svg>Build Compound</button>
    <button><svg><use href="#copymesh"/></svg>Copy Mesh</button>
    <button><svg><use href="#dual"/></svg>Create Dual Mesh</button>
    <hr>
    <button><svg><use href="#gear"/></svg>Compute</button>
    <button><svg><use href="#preview"/></svg>Preview</button>
    <button><svg><use href="#evaluate"/></svg>Evaluate</button>
    <button><svg><use href="#priority"/></svg>Change sub-mesh priority</button>
    <hr>
    <button><svg><use href="#group"/></svg>Create Group</button>
    <button><svg><use href="#geogroup"/></svg>Create Groups from Geometry</button>
    <button><svg><use href="#stargroup"/></svg>Construct Group</button>
    <button><svg><use href="#editgroup"/></svg>Edit Group</button>
    <button><svg><use href="#editgroup"/></svg>Edit Group as Standalone</button>
    <hr>
    <button><svg><use href="#union"/></svg>Union Groups</button>
    <button><svg><use href="#intersect"/></svg>Intersect Groups</button>
    <button><svg><use href="#cut"/></svg>Cut Groups</button>
    <hr>
    <button><svg><use href="#nodes"/></svg>Group based on nodes of other groups</button>
    <button><svg><use href="#sharp"/></svg>Face groups separated by sharp edges</button>
    <hr>
    <button><svg><use href="#info"/></svg>Mesh Information</button>
    <button><svg><use href="#find"/></svg>Find Element by Point</button>
    <hr>
    <button><svg></svg>SMESH plugins<svg class="more"><use href="#right"/></svg></button>
  </div>
</section>
</main>
</body>
</html>
```
FILE: styles.css
```css
*, ::after { box-sizing: border-box; }

body {
  margin: 0;
  background: #fff;
  font-family: "Liberation Sans", Arial, sans-serif;
  font-size: 11px;
  color: #fff;
}

.sprite { position: absolute; width: 0; height: 0; }
svg { display: block; flex: none; }
button { font: inherit; color: inherit; background: none; border: 0; padding: 0; }

.page {
  display: grid;
  grid-template-columns: 607fr 305fr;
  align-items: start;
  gap: 16px;
  padding: 16px;
}

/* Sizes shared by every part of a window; .compact redefines them. */
.window {
  --title: 19px;
  --bar: 19px;
  --row: 45px;
  --btn: 37px;
  --icon: 20px;
  --menu-pad: 8px;
  --dock: 18px;
  --head: 20px;
  --line: 17px;
  --vis: 31px;
  --tw: 8px;
  --indent: 24px;
  --small-icon: 14px;
  position: relative;
  min-width: 0;
  overflow: hidden;
  background: #2d2d2d;
}

.titlebar {
  display: flex;
  align-items: center;
  gap: 5px;
  height: var(--title);
  padding-bottom: 3px;
  background: #f3f3f3;
  color: #868686;
  font-family: "Noto Sans", "Open Sans", sans-serif;
  white-space: nowrap;
}
.logo { width: 16px; height: 12px; }

.menubar {
  display: flex;
  height: var(--bar);
  background: #1e1e1e;
  line-height: 17px;
  white-space: nowrap;
}
.menubar a { color: #fff; text-decoration: none; padding: 0 var(--menu-pad); }
.menubar u { text-underline-offset: 2px; }

.toolbar {
  display: flex;
  align-items: center;
  height: var(--row);
  padding-bottom: 2px;
  border-top: 1px solid #787878;
  background: linear-gradient(#2b2b2b, #313131 50%, #292929);
}
.toolbar button {
  display: flex;
  flex: none;
  align-items: center;
  justify-content: center;
  width: var(--btn);
  height: var(--btn);
  margin: 0 1px;
}
.toolbar button svg { width: var(--icon); height: var(--icon); }
.toolbar button .wide { width: 24px; }
.toolbar .pressed { border: 1px solid #4a4a4a; border-radius: 3px; background: #303030; }
.toolbar .bright { filter: brightness(1.2); }
.toolbar .eficas { justify-content: flex-start; padding-left: 8px; color: #1b6878; font-family: "Liberation Serif", serif; }

/* Two columns of 2px dots, 1px apart. */
.handle {
  flex: none;
  width: 5px;
  height: 17px;
  margin: 0 3px 0 2px;
  background:
    repeating-linear-gradient(transparent 0 2px, #2d2d2d 2px 3px),
    repeating-linear-gradient(90deg, #6c6c6c 0 2px, transparent 2px 3px);
}
* + .handle { margin-left: 8px; }
.sep { flex: none; width: 1px; height: 24px; margin: 0 3px; background: #272727; }

.module { display: flex; align-self: stretch; align-items: center; position: relative; margin-right: 8px; }
.module .handle { margin-left: 8px; }
.module::after { content: ""; position: absolute; inset: -2px -10px -6px 4px; border: 4px solid #e8234f; }
.combo {
  display: flex;
  align-items: center;
  width: 113px;
  height: 27px;
  margin-left: 1px;
  padding: 0 6px;
  border: 1px solid #525252;
  border-radius: 3px;
  background: linear-gradient(#3a3a3a, #2c2c2c);
}
.combo-icon { width: 18px; height: 18px; }
.combo select { flex: 1; min-width: 0; appearance: none; border: 0; background: none; color: #fff; font: inherit; padding: 0 3px; }
.chevron { width: 8px; height: 5px; color: #aaa; }

.workspace { display: grid; grid-template-columns: 398fr 209fr; border-top: 1px solid #787878; }
.dock { display: flex; flex-direction: column; min-width: 0; }
.dock-title { display: flex; align-items: center; gap: 2px; height: var(--dock); padding-right: 9px; }
.dock-title h2 { flex: 1; margin: 0; font-size: inherit; font-weight: 400; }
.dock-title svg { width: 12px; height: 12px; }

.tree-area {
  flex: 1;
  min-height: 204px;
  margin-right: 8px;
  background: linear-gradient(#2e2e2e 0 var(--head), #121212 var(--head));
  border-top: 1px solid #202020;
}
.tree { border-collapse: collapse; table-layout: fixed; width: 168px; }
.tree th {
  height: var(--head);
  padding: 0;
  font-weight: 400;
  background: linear-gradient(#424242, #303030);
  border-right: 1px solid #555;
}
.tree .vis { width: var(--vis); }
.tree td { height: var(--line); padding: 0; }
.cell { display: flex; align-items: center; height: var(--line); white-space: nowrap; line-height: 13px; padding-bottom: 4px; }
.cell.l0 { padding-left: 10px; }
.cell.l1 { padding-left: calc(10px + var(--indent)); }
.cell.l2 { padding-left: calc(12px + var(--indent) * 2); }
.tw { flex: none; width: var(--tw); height: 6px; color: #b0b0b0; margin-top: 4px; }
.ic { width: var(--small-icon); height: var(--small-icon); margin: 4px 6px 0 12px; }
.eye { width: 14px; height: 9px; margin: 2px 0 0 3px; color: #454545; }
.eye.lit { color: #7088b8; }
.selected { background: #2a82da; color: #000; }
.selected .eye, .selected .tw { color: #a4d0f6; }
.red { color: #c02828; }
.teal { color: #4c7088; }

.viewer { display: flex; flex-direction: column; min-width: 0; border: solid #9c9c9c; border-width: 2px 0 0 3px; }
.tabs { height: 24px; margin-top: 1px; border-bottom: 2px solid #f0f0f0; background: #292929; box-shadow: inset 2px 2px 0 #3e3e3e; }
.viewer .toolbar { border: 0; border-bottom: 1px solid #888; }
.viewer .handle { margin: 0 3px 0 5px; }
.scene { flex: 1; background: #000; }

/* Smaller window, scrolled slightly to the left inside its frame. */
.compact {
  --title: 17px;
  --bar: 14px;
  --row: 34px;
  --btn: 28px;
  --icon: 15px;
  --menu-pad: 6px;
  --dock: 14px;
  --head: 13px;
  --line: 13px;
  --vis: 24px;
  --tw: 6px;
  --indent: 19px;
  --small-icon: 11px;
  aspect-ratio: 305 / 385;
  font-size: 9px;
}
.frame { margin-left: -8px; }
.compact .titlebar { color: #2c2c2c; gap: 4px; padding: 0; font-family: "Open Sans", sans-serif; }
.compact .logo { width: 12px; height: 9px; }
.compact .menubar { line-height: 13px; }
.compact .menubar .active { margin: 0 2px; padding: 0 4px; background: #2a82da; color: #101c2c; }
.compact .menubar a:nth-child(3), .compact .menubar a:nth-child(8) { padding-right: 4px; }
.compact .menubar a:nth-child(5) { padding-left: 4px; }
.compact .menubar a:nth-child(n+6) { padding: 0 5px; }
.compact .toolbar { padding-bottom: 0; }
.compact .handle { height: 14px; margin: 0 2px 0 1px; }
.compact * + .handle { margin-left: 5px; }
.compact .toolbar .wide { width: 18px; }
.compact .tree-area { margin: 0; }
.compact .tree { width: 86px; }
.compact .cell { line-height: 11px; padding-bottom: 0; }
.compact .cell.l0 { padding-left: 7px; }
.compact .cell.l1 { padding-left: calc(7px + var(--indent)); }
.compact .cell.l2 { padding-left: calc(7px + var(--indent) * 2); }
.compact .tw { height: 5px; margin-top: 2px; }
.compact .ic { margin: 1px 5px 0 9px; }
.compact .l1 .ic { margin-right: 3px; }
.compact .eye { width: 12px; height: 8px; }
.compact .selected { color: #15304c; }

.menu {
  position: absolute;
  top: 30px;
  right: 1px;
  bottom: -5px;
  left: 78px;
  display: flex;
  flex-direction: column;
  background: #141414;
}
.menu button {
  position: relative;
  display: flex;
  flex: 1;
  align-items: center;
  gap: 4px;
  padding: 0 4px 0 6px;
  text-align: left;
  white-space: nowrap;
  color: #e8e8e8;
}
.menu svg { width: 12px; height: 12px; }
.menu .more { width: 4px; height: 6px; margin-left: auto; color: #aaa; }
.menu hr { width: 100%; height: 1px; margin: 0; border: 0; background: #1c1c1c; }
.menu .current { background: #2a82da; color: #0c1c30; }
.menu .marked::after { content: ""; position: absolute; top: -3px; left: -4px; width: 98px; bottom: -5px; border: 4px solid #e8234f; z-index: 1; }
```
